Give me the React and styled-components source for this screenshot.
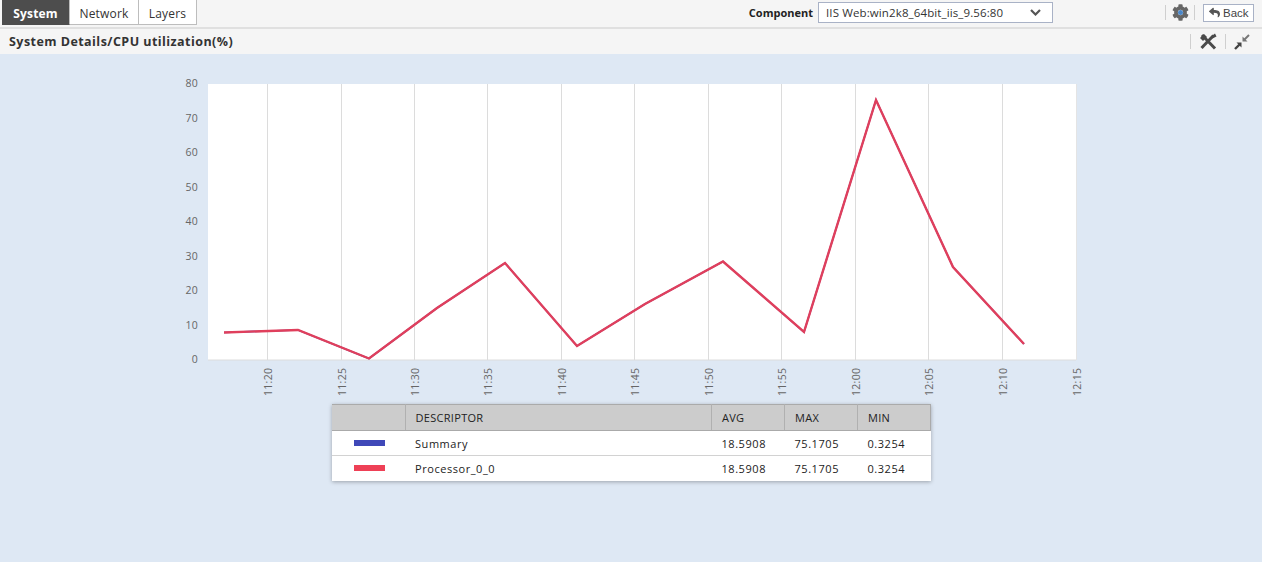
import React from "react";
import styled, { createGlobalStyle } from "styled-components";
import { FaCog, FaReply } from "react-icons/fa";

const GlobalStyle = createGlobalStyle`
  html, body {
    margin: 0;
    padding: 0;
    height: 100%;
    background: #dee8f4;
    font-family: "Open Sans", "Liberation Sans", sans-serif;
    overflow: hidden;
  }
`;

const CHART_LEFT = 171;
const CHART_TOP = 70;

const xTicks = [
  ["11:20", 267], ["11:25", 341], ["11:30", 414], ["11:35", 487], ["11:40", 561], ["11:45", 634],
  ["11:50", 708], ["11:55", 781], ["12:00", 855], ["12:05", 928], ["12:10", 1002], ["12:15", 1076],
];
const yLabels = [0, 10, 20, 30, 40, 50, 60, 70, 80];
const points = [
  [224, 332.5], [298, 330], [369, 358.5], [437, 308], [505, 263], [577, 346],
  [645, 304], [723, 261.5], [804, 332], [876, 100], [953, 267], [1024, 344],
];
const rows = [
  { name: "Summary", color: "#3f48b8" },
  { name: "Processor_0_0", color: "#ee4056" },
];

const polyline = points.map(([x, y]) => `${x - CHART_LEFT},${y - CHART_TOP}`).join(" ");

const App = () => {
  return (
    <Page>
      <GlobalStyle />
      <TopBar>
        <Tabs>
          <Tab $active $width={68}>System</Tab>
          <Tab $width={69}>Network</Tab>
          <Tab $width={58}>Layers</Tab>
        </Tabs>
        <ComponentPicker>
          <PickerLabel>Component</PickerLabel>
          <Picker>
            IIS Web:win2k8_64bit_iis_9.56:80
            <svg width="11" height="7" viewBox="0 0 11 7">
              <path d="M1 1l4.5 4.5L10 1" fill="none" stroke="#555" strokeWidth="2.2" />
            </svg>
          </Picker>
        </ComponentPicker>
        <Actions>
          <Divider />
          <GearIcon>
            <FaCog size={17} color="#666" />
            <GearDot />
          </GearIcon>
          <Divider />
          <BackButton>
            <FaReply size={11} color="#555" />
            Back
          </BackButton>
        </Actions>
      </TopBar>
      <TitleBar>
        <Title>System Details/CPU utilization(%)</Title>
        <TitleActions>
          <Divider />
          <svg width="18" height="17" viewBox="0 0 18 17">
            <path d="M3 2l13 13.5" stroke="#4a4a4a" strokeWidth="3" />
            <path d="M14.5 2.5L2.5 15" stroke="#4a4a4a" strokeWidth="3" />
            <path d="M1 5L5 1l3 3-4 4z" fill="#4a4a4a" />
            <path d="M16 0.5l1.5 3-4 2-1.5-2z" fill="#4a4a4a" />
          </svg>
          <Divider />
          <svg width="16" height="16" viewBox="0 0 16 16">
            <path d="M15 1L10.5 5.5" stroke="#777" strokeWidth="2" />
            <path d="M8.5 2.5v5h5z" fill="#777" />
            <path d="M1 15l4.5-4.5" stroke="#444" strokeWidth="2.4" />
            <path d="M2.5 8.5h5v5z" fill="#444" />
          </svg>
        </TitleActions>
      </TitleBar>
      <Main>
        <ChartSvg width="920" height="334" viewBox="0 0 920 334">
          <rect x="37" y="14" width="868" height="276" fill="#fff" />
          {xTicks.map(([label, px]) => {
            const x = px - CHART_LEFT;
            return (
              <g key={label}>
                <line
                  x1={x + 0.5}
                  x2={x + 0.5}
                  y1="14"
                  y2="290"
                  stroke={label === "12:15" ? "#e4e4e4" : "#dcdcdc"}
                />
                <AxisText x={x + 1} y="326" transform={`rotate(-90 ${x + 1} 326)`} dy="4">
                  {label}
                </AxisText>
              </g>
            );
          })}
          <line x1="37" x2="905" y1="290" y2="290" stroke="#dcdcdc" />
          {yLabels.map((label) => (
            <AxisText key={label} x="27" y={289.5 - label * 3.45 + 3.5} textAnchor="end">
              {label}
            </AxisText>
          ))}
          <polyline points={polyline} fill="none" stroke="#3f48b8" strokeWidth="1.6" />
          <polyline points={polyline} fill="none" stroke="#e03f5c" strokeWidth="2.4" />
        </ChartSvg>
        <Legend>
          <thead>
            <tr>
              <HeadCell $width={73} />
              <HeadCell>DESCRIPTOR</HeadCell>
              <HeadCell $width={73}>AVG</HeadCell>
              <HeadCell $width={73}>MAX</HeadCell>
              <HeadCell $width={73} $last>MIN</HeadCell>
            </tr>
          </thead>
          <tbody>
            {rows.map((row) => (
              <tr key={row.name}>
                <Cell><Swatch $color={row.color} /></Cell>
                <Cell>{row.name}</Cell>
                <Cell>18.5908</Cell>
                <Cell>75.1705</Cell>
                <Cell>0.3254</Cell>
              </tr>
            ))}
          </tbody>
        </Legend>
      </Main>
    </Page>
  );
};

export default App;

const Page = styled.div`
  height: 562px;
  display: flex;
  flex-direction: column;
`;

const TopBar = styled.div`
  height: 27px;
  flex: none;
  display: flex;
  align-items: flex-start;
  padding-left: 2px;
  padding-right: 8px;
  background: #f5f5f5;
  border-bottom: 2px solid #e0e0e0;
`;

const Tabs = styled.div`
  display: flex;
  height: 25px;
`;

const Tab = styled.div`
  display: flex;
  align-items: center;
  justify-content: center;
  box-sizing: border-box;
  width: ${(p) => p.$width}px;
  padding-top: 2px;
  font-size: 12px;
  letter-spacing: 0.2px;
  font-weight: ${(p) => (p.$active ? 700 : 400)};
  color: ${(p) => (p.$active ? "#fff" : "#333")};
  background: ${(p) => (p.$active ? "#4d4d4d" : "#fff")};
  border-right: 1px solid #bdbdbd;
  border-bottom: 1px solid ${(p) => (p.$active ? "#4d4d4d" : "#bdbdbd")};
`;

const ComponentPicker = styled.div`
  margin-left: auto;
  display: flex;
  align-items: center;
  gap: 5px;
  height: 25px;
`;

const PickerLabel = styled.span`
  font-size: 11px;
  font-weight: 700;
  color: #222;
`;

const Picker = styled.div`
  box-sizing: border-box;
  width: 235px;
  height: 21px;
  display: flex;
  align-items: center;
  justify-content: space-between;
  padding: 0 11px 0 7px;
  font-size: 11.5px;
  letter-spacing: 0.12px;
  color: #333;
  background: #fff;
  border: 1px solid #a9b2c6;
`;

const Actions = styled.div`
  margin-left: 112px;
  height: 25px;
  display: flex;
  align-items: center;
  gap: 8px;
`;

const Divider = styled.div`
  width: 1px;
  height: 15px;
  background: #cfcfcf;
`;

const GearIcon = styled.div`
  position: relative;
  width: 17px;
  height: 17px;
  margin: 0 -2.5px;
  display: flex;
`;

const GearDot = styled.span`
  position: absolute;
  left: 6px;
  top: 6px;
  width: 5px;
  height: 5px;
  border-radius: 50%;
  background: #4a86c8;
`;

const BackButton = styled.div`
  box-sizing: border-box;
  width: 51px;
  height: 18px;
  display: flex;
  align-items: center;
  gap: 3px;
  padding-left: 5px;
  font-family: "Liberation Sans", sans-serif;
  font-size: 11.5px;
  color: #444;
  background: #fff;
  border: 1px solid #a9b2c6;
`;

const TitleBar = styled.div`
  height: 25px;
  flex: none;
  display: flex;
  align-items: center;
  justify-content: space-between;
  padding: 0 12px 0 9px;
  background: #f5f5f5;
`;

const Title = styled.div`
  font-size: 12.5px;
  letter-spacing: 0.45px;
  font-weight: 700;
  color: #333;
`;

const TitleActions = styled.div`
  display: flex;
  align-items: center;
  gap: 8px;
`;

const Main = styled.div`
  flex: 1;
  display: flex;
  flex-direction: column;
  align-items: center;
  padding-top: 16px;
  background: #dee8f4;
`;

const ChartSvg = styled.svg`
  display: block;
  flex: none;
`;

const AxisText = styled.text`
  font-family: "Open Sans", "Liberation Sans", sans-serif;
  font-size: 10.5px;
  letter-spacing: 0.3px;
  fill: #666;
`;

const Legend = styled.table`
  width: 599px;
  margin-left: 1px;
  border-collapse: collapse;
  table-layout: fixed;
  background: #fff;
  box-shadow: 0 1px 4px rgba(0, 0, 0, 0.3);
`;

const HeadCell = styled.th`
  width: ${(p) => (p.$width ? `${p.$width}px` : "auto")};
  height: 26px;
  padding: 0 0 0 10px;
  box-sizing: border-box;
  text-align: left;
  font-size: 11px;
  letter-spacing: 0.3px;
  font-weight: 400;
  color: #222;
  background: #cccccc;
  border-top: 1px solid #aaa;
  border-bottom: 1px solid #aaa;
  border-right: ${(p) => (p.$last ? "1px solid #aaa" : "1px solid #b0b0b0")};
`;

const Cell = styled.td`
  height: 25px;
  padding: 0 0 0 10px;
  box-sizing: border-box;
  font-size: 11px;
  letter-spacing: 0.55px;
  color: #222;
  border-bottom: 1px solid #d2d2d2;

  tr:last-child & {
    border-bottom: 0;
  }
`;

const Swatch = styled.div`
  width: 31px;
  height: 6px;
  margin-left: 12px;
  background: ${(p) => p.$color};
`;
